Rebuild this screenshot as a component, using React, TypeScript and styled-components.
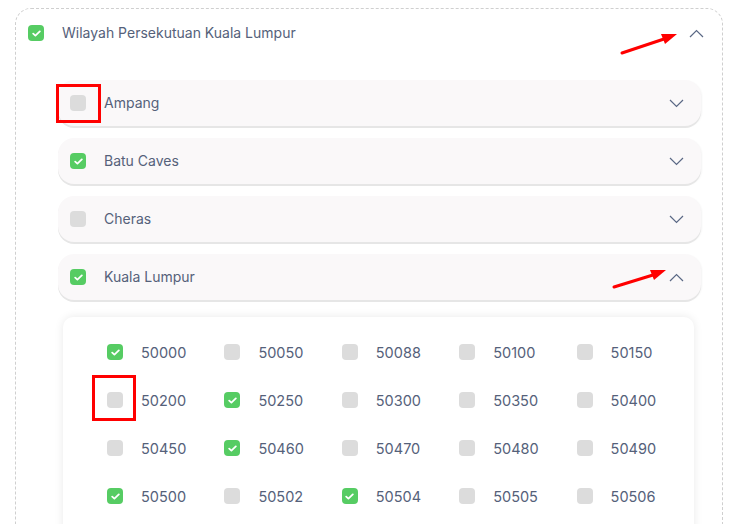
import React from 'react';
import styled, { createGlobalStyle } from 'styled-components';

const GlobalStyle = createGlobalStyle`
  html, body {
    margin: 0;
    padding: 0;
    background: #ffffff;
    overflow: hidden;
    height: 524px;
  }
  body {
    font-family: Inter, "Open Sans", Arial, sans-serif;
    color: #55617a;
  }
`;

const Page = styled.div`
  position: relative;
  padding: 8px 16px 0 15px;
`;

const Card = styled.div`
  border: 1px dashed #cfcfcf;
  border-radius: 16px;
  padding-bottom: 40px;
`;

const CardHeader = styled.div`
  height: 48px;
  display: flex;
  align-items: center;
  padding: 0 18px 0 12px;
  gap: 18px;
`;

const HeaderTitle = styled.span`
  flex: 1;
  font-size: 14px;
  line-height: 18px;
`;

const CardBody = styled.div`
  padding: 23px 21px 0 42px;
  display: flex;
  flex-direction: column;
  gap: 12px;
`;

const Item = styled.div`
  height: 46px;
  display: flex;
  align-items: center;
  gap: 18px;
  padding: 0 17px 0 12px;
  background: #faf8f9;
  border-radius: 16px;
  box-shadow: 0 2px 0 #e6e6e6, 1px 1px 2px rgba(0, 0, 0, 0.05);
`;

const ItemLabel = styled.span`
  flex: 1;
  font-size: 14px;
  line-height: 18px;
`;

const Panel = styled.div`
  margin: 5px 7px 0 5px;
  background: #ffffff;
  border-radius: 10px;
  box-shadow: 0 0 10px rgba(0, 0, 0, 0.09);
  padding: 11px 0 60px 44px;
  display: grid;
  grid-template-columns: repeat(5, 1fr);
  grid-auto-rows: 48px;
`;

const Cell = styled.label`
  display: flex;
  align-items: center;
  gap: 18px;
  font-size: 14.5px;
`;

const Box = styled.span<{ checked?: boolean }>`
  width: 16px;
  height: 16px;
  flex-shrink: 0;
  border-radius: 4px;
  background: ${p => (p.checked ? '#56cc63' : '#dcdcdc')};
  display: flex;
  align-items: center;
  justify-content: center;
`;

const Chevron = styled.svg`
  width: 15px;
  height: 9px;
  flex-shrink: 0;
`;

const Marker = styled.div<{ x: number; y: number; w: number; h: number }>`
  position: absolute;
  left: ${p => p.x}px;
  top: ${p => p.y}px;
  width: ${p => p.w}px;
  height: ${p => p.h}px;
  border: 3px solid #ff0000;
  box-sizing: border-box;
  pointer-events: none;
`;

const Overlay = styled.svg`
  position: absolute;
  left: 0;
  top: 0;
  width: 739px;
  height: 524px;
  pointer-events: none;
`;

const Check: React.FC<{ checked?: boolean }> = ({ checked }) => (
  <Box checked={checked}>
    {checked && (
      <svg width="9" height="7" viewBox="0 0 9 7">
        <polyline points="1.2,3.6 3.4,5.6 7.8,1.4" fill="none" stroke="#fff" strokeWidth="1.8" strokeLinecap="round" strokeLinejoin="round" />
      </svg>
    )}
  </Box>
);

const ChevronIcon: React.FC<{ up?: boolean }> = ({ up }) => (
  <Chevron viewBox="0 0 15 9">
    <polyline
      points={up ? '1,8 7.5,1.5 14,8' : '1,1 7.5,7.5 14,1'}
      fill="none"
      stroke="#5a6885"
      strokeWidth="1.2"
    />
  </Chevron>
);

const areas = [
  { name: 'Ampang', checked: false, open: false },
  { name: 'Batu Caves', checked: true, open: false },
  { name: 'Cheras', checked: false, open: false },
  { name: 'Kuala Lumpur', checked: true, open: true },
];

const postcodes: [string, boolean][] = [
  ['50000', true], ['50050', false], ['50088', false], ['50100', false], ['50150', false],
  ['50200', false], ['50250', true], ['50300', false], ['50350', false], ['50400', false],
  ['50450', false], ['50460', true], ['50470', false], ['50480', false], ['50490', false],
  ['50500', true], ['50502', false], ['50504', true], ['50505', false], ['50506', false],
];

const App: React.FC = () => (
  <>
    <GlobalStyle />
    <Page>
      <Card>
        <CardHeader>
          <Check checked />
          <HeaderTitle>Wilayah Persekutuan Kuala Lumpur</HeaderTitle>
          <ChevronIcon up />
        </CardHeader>
        <CardBody>
          {areas.map(a => (
            <React.Fragment key={a.name}>
              <Item>
                <Check checked={a.checked} />
                <ItemLabel>{a.name}</ItemLabel>
                <ChevronIcon up={a.open} />
              </Item>
              {a.open && (
                <Panel>
                  {postcodes.map(([code, on]) => (
                    <Cell key={code}>
                      <Check checked={on} />
                      {code}
                    </Cell>
                  ))}
                </Panel>
              )}
            </React.Fragment>
          ))}
        </CardBody>
      </Card>

      <Marker x={56} y={84} w={45} h={39} />
      <Marker x={92} y={375} w={44} h={46} />
      <Overlay viewBox="0 0 739 524">
        <line x1="622" y1="53" x2="664" y2="39" stroke="#ff0000" strokeWidth="3" strokeLinecap="round" />
        <polygon points="677,34 661,34 665,44" fill="#ff0000" />
        <line x1="614" y1="287" x2="653" y2="275" stroke="#ff0000" strokeWidth="3" strokeLinecap="round" />
        <polygon points="666,270 650,270 654,280" fill="#ff0000" />
      </Overlay>
    </Page>
  </>
);

export default App;
